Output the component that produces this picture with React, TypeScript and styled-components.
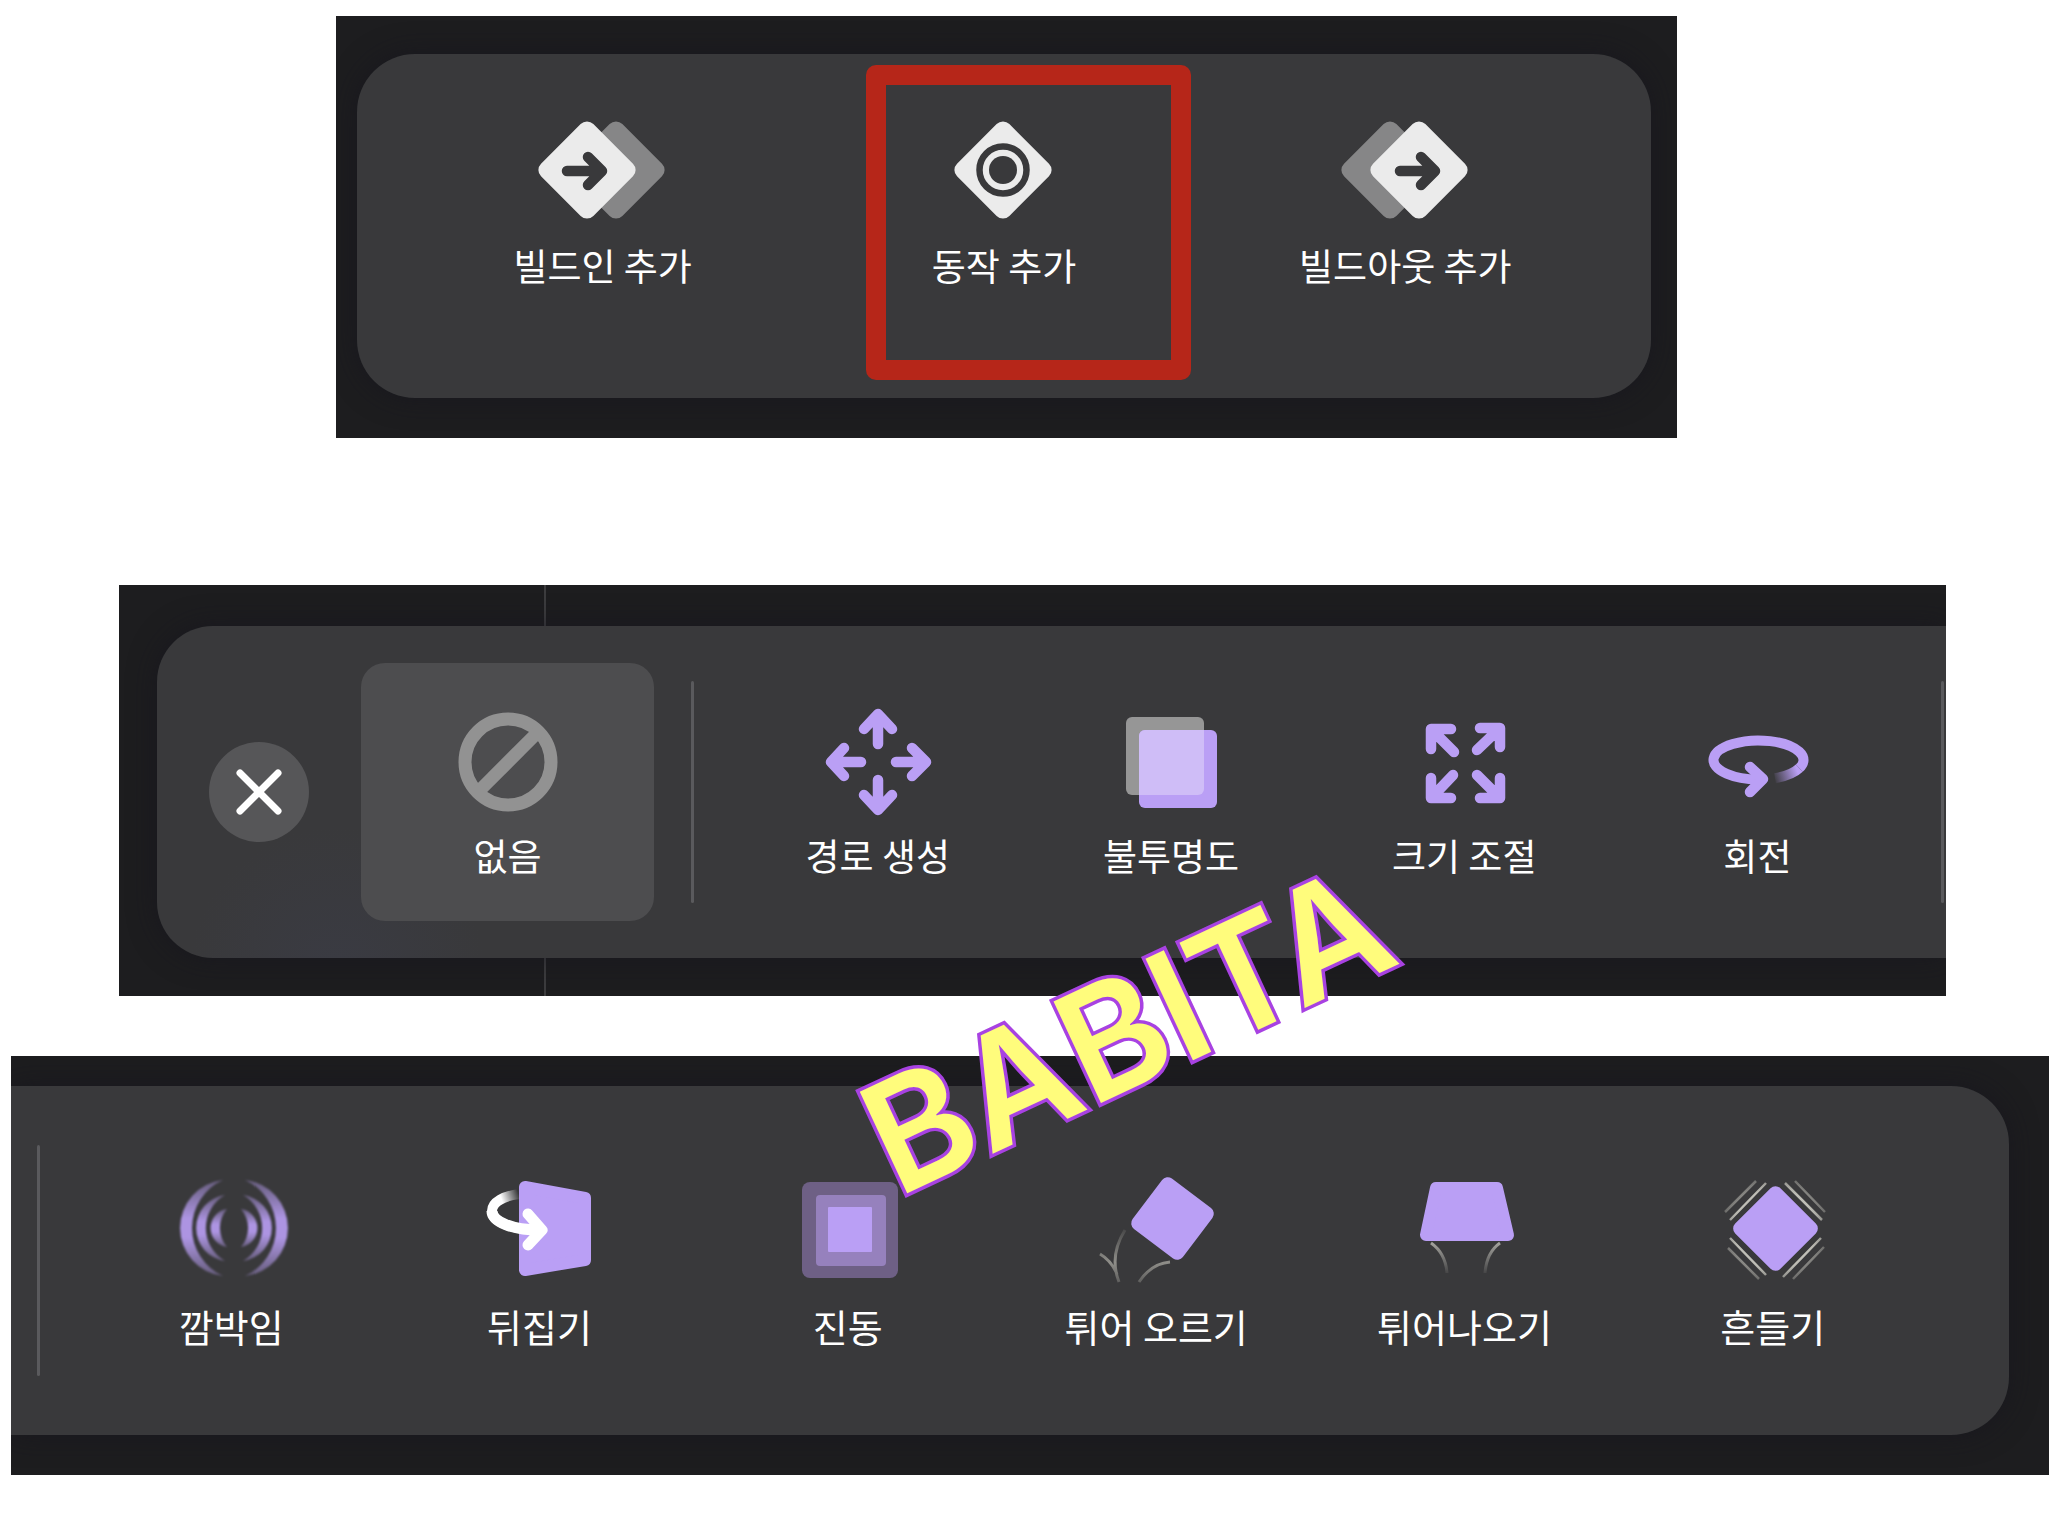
import React from "react";
import styled, { createGlobalStyle, css } from "styled-components";

const lilac = "#ba9ff5";
const mist = "#ebebeb";
const trayColor = "#39393b";

const GlobalStyle = createGlobalStyle`
  *, *::before, *::after { box-sizing: border-box; }
  body {
    margin: 0;
    background: #fff;
    font-family: "Noto Sans CJK KR", "Noto Sans", sans-serif;
  }
`;

const Page = styled.main`
  position: relative;
  display: flex;
  flex-direction: column;
  padding: 16px 0 49px;
  overflow: hidden;
`;

const Panel = styled.section<{ $margin: string; $padding: string }>`
  position: relative;
  display: flex;
  margin: ${(p) => p.$margin};
  padding: ${(p) => p.$padding};
  background: #1d1d1f;
  overflow: hidden;
`;

const CanvasGuide = styled.span`
  position: absolute;
  top: 0;
  bottom: 0;
  left: 425px;
  width: 2px;
  background: #3c3c3e;
`;

const Tray = styled.div<{ $radius: string; $padding: string; $glow?: boolean }>`
  position: relative;
  display: flex;
  flex: 1;
  min-width: 0;
  padding: ${(p) => p.$padding};
  border-radius: ${(p) => p.$radius};
  background: ${trayColor};
  box-shadow: 0 0 28px rgba(22, 20, 30, 0.6);
  ${(p) =>
    p.$glow &&
    css`
      background-image: radial-gradient(circle at 180px 350px, #3a3b43 0, rgba(57, 57, 59, 0) 150px);
    `}
`;

const Group = styled.div`
  display: flex;
  flex: 4;
  min-width: 0;
`;

const Tile = styled.button<{ $padding: string; $gap: number; $selected?: boolean }>`
  position: relative;
  display: flex;
  flex: 1;
  flex-direction: column;
  align-items: center;
  justify-content: flex-start;
  gap: ${(p) => p.$gap}px;
  min-width: 0;
  margin: ${(p) => (p.$selected ? "37px 0" : "0")};
  padding: ${(p) => p.$padding};
  border: 0;
  border-radius: 24px;
  background: ${(p) => (p.$selected ? "#4d4d4f" : "transparent")};
  color: #fff;
  font: inherit;
  cursor: pointer;
`;

const Glyph = styled.svg`
  display: block;
  flex: none;
  width: 140px;
  height: 120px;
  overflow: visible;
`;

const Label = styled.span<{ $size: number }>`
  font-size: ${(p) => p.$size}px;
  font-weight: 400;
  line-height: 50px;
  white-space: nowrap;
`;

const Divider = styled.span<{ $inset: number }>`
  flex: none;
  width: 3px;
  margin: ${(p) => p.$inset}px 0;
  border-radius: 2px;
  background: #5a5a5d;
`;

const TrayRow = styled.div`
  display: flex;
  flex: 1;
  gap: 37px;
  min-width: 0;
`;

const CloseButton = styled.button`
  display: grid;
  flex: none;
  align-self: center;
  place-items: center;
  width: 100px;
  height: 100px;
  margin: 0 52px;
  padding: 0;
  border: 0;
  border-radius: 50%;
  background: #565658;
  cursor: pointer;
`;

const Highlight = styled.span`
  position: absolute;
  top: 11px;
  right: 14px;
  bottom: 18px;
  left: 63px;
  border: 20px solid #b62619;
  border-radius: 10px;
  pointer-events: none;
`;

const Watermark = styled.div`
  position: absolute;
  top: 1060px;
  left: calc(50% - 135px);
  color: #fffc7c;
  font-family: Inter, "Liberation Sans", Arial, sans-serif;
  font-size: 154px;
  font-weight: 600;
  line-height: 154px;
  white-space: nowrap;
  paint-order: stroke fill;
  -webkit-text-stroke: 7px #a842e2;
  text-shadow: 1px 2px 0 #a842e2;
  transform: rotate(-25deg);
  transform-origin: 12px 133px;
  pointer-events: none;
`;

const Diamond = ({ x, fill }: { x: number; fill: string }) => (
  <rect x={x - 37} y={23} width={74} height={74} rx={9} fill={fill} transform={`rotate(45 ${x} 60)`} />
);

const InnerArrow = ({ x }: { x: number }) => (
  <path
    d="M-20 1H14M1 -13L15 1L1 15"
    transform={`translate(${x} 60)`}
    fill="none"
    stroke={trayColor}
    strokeWidth={10.5}
    strokeLinecap="round"
    strokeLinejoin="round"
  />
);

const BuildInIcon = () => (
  <>
    <Diamond x={83} fill="#868687" />
    <Diamond x={54} fill={mist} />
    <InnerArrow x={54} />
  </>
);

const ActionIcon = () => (
  <>
    <Diamond x={69} fill={mist} />
    <circle cx={69} cy={60} r={23.5} fill="none" stroke={trayColor} strokeWidth={6.5} />
    <circle cx={69} cy={60} r={14} fill={trayColor} />
  </>
);

const BuildOutIcon = () => (
  <>
    <Diamond x={55} fill="#868687" />
    <Diamond x={84} fill={mist} />
    <InnerArrow x={85} />
  </>
);

const NoneIcon = () => (
  <g fill="none" stroke="#929292" strokeWidth={13}>
    <circle cx={70} cy={60} r={43} />
    <path d="M41 89L99 31" />
  </g>
);

const strokeProps = {
  fill: "none",
  stroke: lilac,
  strokeWidth: 10.5,
  strokeLinecap: "round" as const,
  strokeLinejoin: "round" as const,
};

const MoveIcon = () => (
  <path
    {...strokeProps}
    d="M70 42V14M56 27L70 12L84 27M70 78V106M56 93L70 108L84 93M53 60H25M36 46L23 60L36 74M88 60H117M104 46L118 60L104 74"
  />
);

const OpacityIcon = () => (
  <g transform="translate(-1 0)">
    <rect x={26} y={15} width={78} height={78} rx={6} fill="#969696" />
    <rect x={39} y={28} width={78} height={78} rx={6} fill={lilac} />
    <path d="M45 28H104V87A6 6 0 0 1 98 93H39V34A6 6 0 0 1 45 28Z" fill="#cfbdf7" />
  </g>
);

const ScaleIcon = () => (
  <path
    {...strokeProps}
    d="M57 27H37V47M38 28L60 50M86 26H106V45M105 27L83 48M57 96H37V76M38 95L59 73M86 96H106V76M105 95L83 73"
  />
);

const RotateIcon = () => (
  <>
    <defs>
      <linearGradient id="rotateTail" gradientUnits="userSpaceOnUse" x1={110} y1={68} x2={86} y2={76}>
        <stop offset="0" stopColor={lilac} />
        <stop offset="1" stopColor={lilac} stopOpacity={0} />
      </linearGradient>
    </defs>
    <path d="M112.3 66.2A45 19.5 0 0 1 88 76.2" fill="none" stroke="url(#rotateTail)" strokeWidth={10} />
    <path d="M112.3 66.2A45 19.5 0 1 0 75.4 77.4" fill="none" stroke={lilac} strokeWidth={10} />
    <path {...strokeProps} d="M63 65L76 77L63 90" />
  </>
);

const waves = [
  "M62 12A48.3 48.3 0 0 0 62 108A52.7 52.7 0 0 1 62 12Z",
  "M64 27A33.3 33.3 0 0 0 64 93A38 38 0 0 1 64 27Z",
  "M66 41A19.2 19.2 0 0 0 66 79A29 29 0 0 1 66 41Z",
];

const BlinkIcon = () => (
  <>
    <defs>
      <linearGradient id="blinkFade" x1={0} y1={0} x2={0} y2={1}>
        <stop offset="0" stopColor={lilac} stopOpacity={0.35} />
        <stop offset="0.4" stopColor={lilac} stopOpacity={0.9} />
        <stop offset="0.6" stopColor={lilac} stopOpacity={0.9} />
        <stop offset="1" stopColor={lilac} stopOpacity={0.35} />
      </linearGradient>
      <filter id="blinkSoft" x="-10%" y="-10%" width="120%" height="120%">
        <feGaussianBlur stdDeviation={1.1} />
      </filter>
    </defs>
    <g fill="url(#blinkFade)" filter="url(#blinkSoft)">
      {waves.map((d) => (
        <React.Fragment key={d}>
          <path d={d} />
          <path d={d} transform="translate(146 0) scale(-1 1)" />
        </React.Fragment>
      ))}
    </g>
  </>
);

const FlipIcon = () => (
  <>
    <defs>
      <linearGradient id="flipTail" gradientUnits="userSpaceOnUse" x1={32} y1={30} x2={49} y2={24}>
        <stop offset="0" stopColor="#fff" />
        <stop offset="1" stopColor="#fff" stopOpacity={0} />
      </linearGradient>
    </defs>
    <path
      d="M56 19L116 30V92L56 102Z"
      fill={lilac}
      stroke={lilac}
      strokeWidth={12}
      strokeLinejoin="round"
    />
    <path d="M50 26C35 28 23 34 23 43C23 54 44 62 70 62" fill="none" stroke="url(#flipTail)" strokeWidth={10} />
    <path d="M23 43C23 54 44 62 70 62" fill="none" stroke="#fff" strokeWidth={11} />
    <path
      d="M59 46L73 62L59 77"
      fill="none"
      stroke="#fff"
      strokeWidth={11}
      strokeLinecap="round"
      strokeLinejoin="round"
    />
  </>
);

const PulseIcon = () => (
  <g transform="translate(1 0)">
    <rect x={23} y={14} width={96} height={96} rx={8} fill="#6e6085" />
    <rect x={37} y={27} width={70} height={71} rx={4} fill="#9681bd" />
    <rect x={49} y={39} width={44} height={45} rx={1} fill={lilac} />
  </g>
);

const JumpIcon = () => (
  <>
    <defs>
      <linearGradient id="jumpTrail" gradientUnits="userSpaceOnUse" x1={0} y1={62} x2={0} y2={116}>
        <stop offset="0" stopColor="#8f8e89" stopOpacity={0.2} />
        <stop offset="0.6" stopColor="#8f8e89" />
        <stop offset="1" stopColor="#8f8e89" stopOpacity={0.4} />
      </linearGradient>
    </defs>
    <rect x={55} y={19} width={63} height={63} rx={7} fill={lilac} transform="rotate(37 86.5 50.5)" />
    <path
      d="M39 62C29 78 26 96 33 114M14 86C21 90 27 97 31 106M53 114C61 102 72 95 84 94"
      fill="none"
      stroke="url(#jumpTrail)"
      strokeWidth={3}
    />
  </>
);

const PopIcon = () => (
  <>
    <defs>
      <linearGradient id="popTrail" gradientUnits="userSpaceOnUse" x1={0} y1={75} x2={0} y2={106}>
        <stop offset="0" stopColor="#a3a29d" />
        <stop offset="1" stopColor="#a3a29d" stopOpacity={0.1} />
      </linearGradient>
    </defs>
    <path
      d="M42 20H103L114 67H32Z"
      fill={lilac}
      stroke={lilac}
      strokeWidth={12}
      strokeLinejoin="round"
    />
    <path d="M37 75C47 82 52 92 53 105M106 75C96 82 92 92 91 105" fill="none" stroke="url(#popTrail)" strokeWidth={3} />
  </>
);

const ShakeIcon = () => (
  <>
    <defs>
      <radialGradient id="shakeLines" gradientUnits="userSpaceOnUse" cx={72} cy={61} r={62}>
        <stop offset="0.65" stopColor="#bfbeb6" />
        <stop offset="1" stopColor="#bfbeb6" stopOpacity={0.1} />
      </radialGradient>
    </defs>
    <rect x={40.5} y={28.5} width={64} height={64} rx={7} fill={lilac} transform="rotate(45 72.5 60.5)" />
    <g fill="none" stroke="url(#shakeLines)" strokeWidth={2.5}>
      <path d="M63 15L27 52M82 15L119 52M27 70L63 107M118 70L80 109" />
      <path d="M53 13L22 44M92 13L122 44M25 80L56 111M121 79L90 111" opacity={0.8} />
    </g>
  </>
);

type Item = { label: string; icon: React.ReactNode; marked?: boolean };

const builds: Item[] = [
  { label: "빌드인 추가", icon: <BuildInIcon /> },
  { label: "동작 추가", icon: <ActionIcon />, marked: true },
  { label: "빌드아웃 추가", icon: <BuildOutIcon /> },
];

const motions: Item[] = [
  { label: "경로 생성", icon: <MoveIcon /> },
  { label: "불투명도", icon: <OpacityIcon /> },
  { label: "크기 조절", icon: <ScaleIcon /> },
  { label: "회전", icon: <RotateIcon /> },
];

const emphases: Item[] = [
  { label: "깜박임", icon: <BlinkIcon /> },
  { label: "뒤집기", icon: <FlipIcon /> },
  { label: "진동", icon: <PulseIcon /> },
  { label: "튀어 오르기", icon: <JumpIcon /> },
  { label: "튀어나오기", icon: <PopIcon /> },
  { label: "흔들기", icon: <ShakeIcon /> },
];

type TileProps = Item & { size: number; padding: string; gap: number; selected?: boolean };

const ActionTile = ({ label, icon, marked, size, padding, gap, selected }: TileProps) => (
  <Tile type="button" $padding={padding} $gap={gap} $selected={selected}>
    <Glyph viewBox="0 0 140 120" aria-hidden="true">
      {icon}
    </Glyph>
    <Label $size={size}>{label}</Label>
    {marked && <Highlight />}
  </Tile>
);

export default function App() {
  return (
    <>
      <GlobalStyle />
      <Page>
        <Panel $margin="0 385px 147px 336px" $padding="38px 26px 40px 21px">
          <Tray $radius="58px" $padding="0 45px">
            {builds.map((item) => (
              <ActionTile key={item.label} {...item} size={37} padding="56px 0 108px" gap={10} />
            ))}
          </Tray>
        </Panel>

        <Panel $margin="0 116px 60px 119px" $padding="41px 0 38px 38px">
          <CanvasGuide />
          <Tray $radius="56px 0 0 56px" $padding="0 2px 0 0" $glow>
            <CloseButton type="button" aria-label="닫기">
              <svg width="48" height="48" viewBox="0 0 48 48" aria-hidden="true">
                <path d="M5 5L43 43M43 5L5 43" fill="none" stroke="#fff" strokeWidth="7" strokeLinecap="round" />
              </svg>
            </CloseButton>
            <TrayRow>
              <ActionTile label="없음" icon={<NoneIcon />} size={37} padding="39px 0 41px" gap={8} selected />
              <Divider $inset={55} />
              <Group>
                {motions.map((item) => (
                  <ActionTile key={item.label} {...item} size={37} padding="76px 0 78px" gap={8} />
                ))}
              </Group>
              <Divider $inset={55} />
            </TrayRow>
          </Tray>
        </Panel>

        <Panel $margin="0 13px 0 11px" $padding="30px 40px 40px 0">
          <Tray $radius="0 58px 58px 0" $padding="0 82px 0 26px">
            <TrayRow>
              <Divider $inset={59} />
              <Group>
                {emphases.map((item) => (
                  <ActionTile key={item.label} {...item} size={38} padding="82px 0 84px" gap={13} />
                ))}
              </Group>
            </TrayRow>
          </Tray>
        </Panel>

        <Watermark>BABITA</Watermark>
      </Page>
    </>
  );
}
